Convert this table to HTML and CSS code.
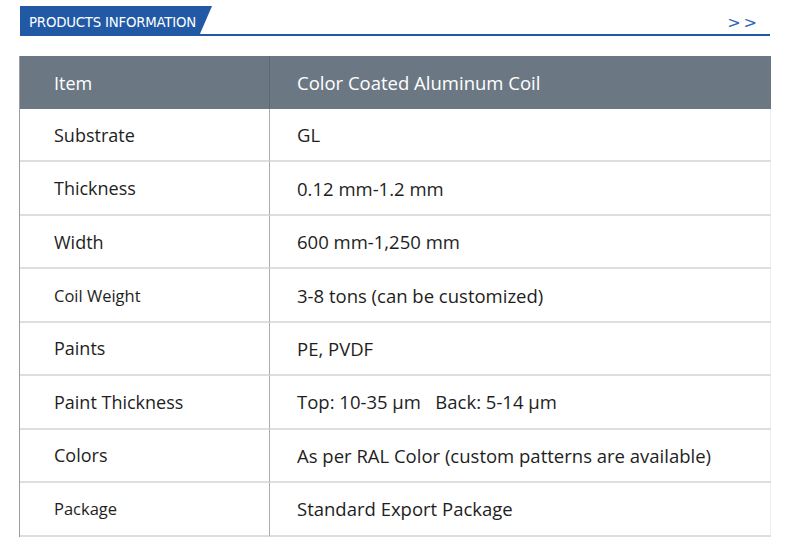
FILE: index.html
```html
<!DOCTYPE html>
<html lang="en">
<head>
<meta charset="utf-8">
<title>Products Information</title>
<link rel="stylesheet" href="styles.css">
</head>
<body>
<div class="page">
  <div class="bar">
    <div class="bar-title">PRODUCTS INFORMATION</div>
    <div class="bar-more">&gt;&gt;</div>
  </div>
  <div class="spec">
    <div class="cell head key">Item</div>
    <div class="cell head val">Color Coated Aluminum Coil</div>

    <div class="cell key">Substrate</div>
    <div class="cell val">GL</div>

    <div class="cell key">Thickness</div>
    <div class="cell val">0.12 mm-1.2 mm</div>

    <div class="cell key">Width</div>
    <div class="cell val">600 mm-1,250 mm</div>

    <div class="cell key small">Coil Weight</div>
    <div class="cell val">3-8 tons (can be customized)</div>

    <div class="cell key">Paints</div>
    <div class="cell val">PE, PVDF</div>

    <div class="cell key">Paint Thickness</div>
    <div class="cell val">Top: 10-35 μm&nbsp;&nbsp;&nbsp;Back: 5-14 μm</div>

    <div class="cell key">Colors</div>
    <div class="cell val">As per RAL Color (custom patterns are available)</div>

    <div class="cell key small">Package</div>
    <div class="cell val">Standard Export Package</div>
  </div>
</div>
</body>
</html>
```

FILE: styles.css
```css
html, body {
  margin: 0;
  padding: 0;
  background: #ffffff;
}

.page {
  padding: 6px 19px 0 20px;
  width: 751px;
  font-family: "Open Sans", "Noto Sans", sans-serif;
  color: #1e1e1e;
}

.bar {
  display: flex;
  align-items: stretch;
  justify-content: space-between;
  height: 28px;
  border-bottom: 2px solid #2159a5;
  width: 750px;
}

.bar-title {
  background: #2159a5;
  color: #ffffff;
  font-family: "DejaVu Sans Condensed", "DejaVu Sans", sans-serif;
  font-size: 14.8px;
  line-height: 31px;
  height: 30px;
  padding: 0 16px 0 9px;
  clip-path: polygon(0 0, 100% 0, calc(100% - 13px) 100%, 0 100%);
  letter-spacing: -0.2px;
}

.bar-more {
  color: #2f66bb;
  font-family: "DejaVu Sans", sans-serif;
  font-size: 16px;
  letter-spacing: 3px;
  line-height: 1;
  align-self: flex-end;
  padding: 0 10px 3px 0;
}

.spec {
  margin-top: 20px;
  display: grid;
  grid-template-columns: 250px 501px;
  grid-template-rows: 53px repeat(8, 53.45px);
  border-left: 1px solid #9a9ea3;
  border-right: 1px solid #eeeeee;
  margin-left: -1px;
}

.cell {
  display: flex;
  align-items: center;
  font-size: 18px;
  border-bottom: 2px solid #dedede;
  box-sizing: border-box;
}

.key {
  padding-left: 34px;
  border-right: 1px solid #a9adb1;
}

.val {
  padding-left: 27px;
  font-size: 18.5px;
}

.key.small {
  font-size: 16.5px;
}

.head {
  background: #6b7884;
  color: #ffffff;
  border-bottom: none;
}

.head.key {
  border-right: 1px solid #5d6873;
}
```
